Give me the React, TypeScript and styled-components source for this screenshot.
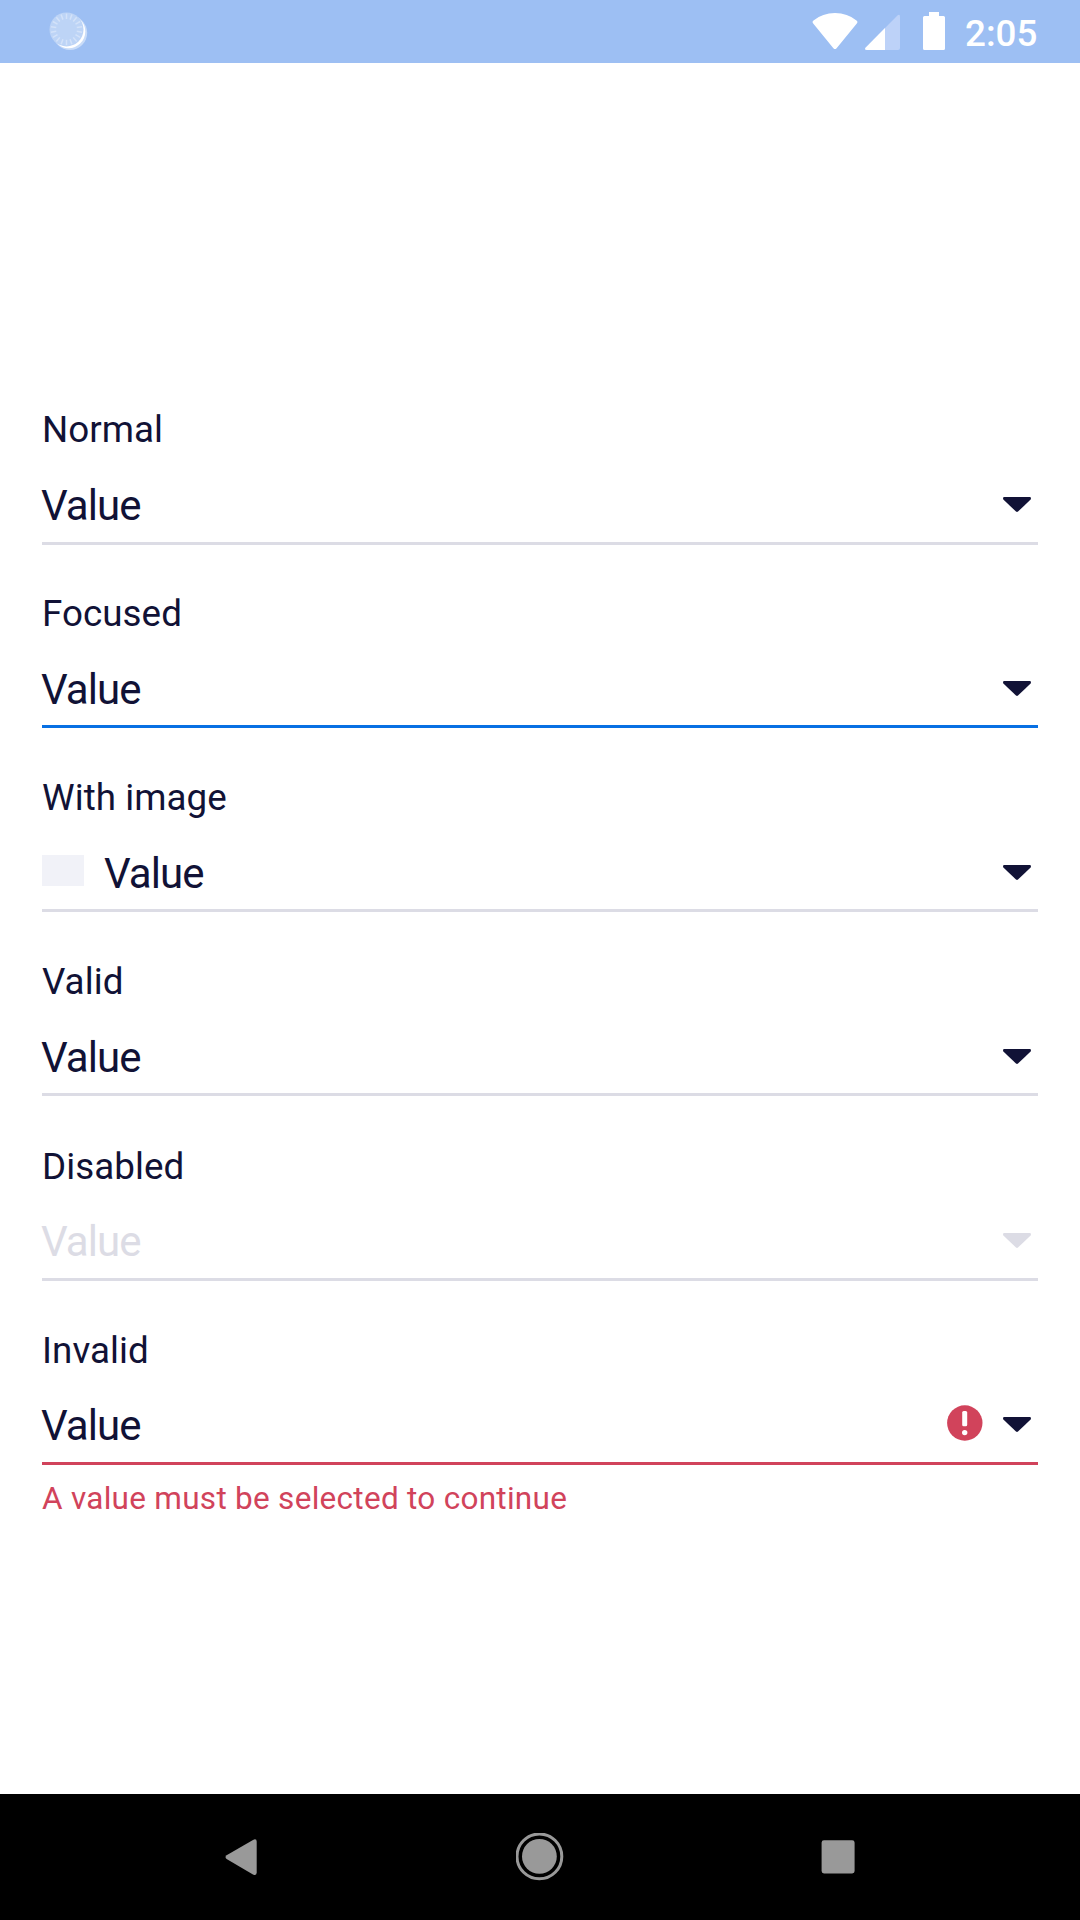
import React from 'react';
import styled, { createGlobalStyle } from 'styled-components';

const color = {
  ink: '#111236',
  line: '#dcdce5',
  focus: '#0770e3',
  error: '#d1435b',
  image: '#f1f2f8',
  status: '#9dbff3',
  nav: '#999999',
};

const GlobalStyle = createGlobalStyle`
  body {
    margin: 0;
    background: #ffffff;
    font-family: Roboto, 'Noto Sans', sans-serif;
  }
`;

const Screen = styled.div`
  display: flex;
  flex-direction: column;
  width: 1080px;
  height: 1920px;
  overflow: hidden;
  background: #ffffff;
`;

const StatusBar = styled.header`
  display: flex;
  align-items: flex-start;
  box-sizing: border-box;
  height: 63px;
  padding: 10px 41px 0 48px;
  background: ${color.status};
`;

const StatusIcons = styled.div`
  display: flex;
  margin-left: auto;
`;

const Clock = styled.time`
  width: 74px;
  margin: 2px 0 0 17px;
  color: #ffffff;
  font-size: 36.75px;
  font-weight: 500;
  line-height: 44px;
  white-space: nowrap;
`;

const Form = styled.main`
  display: flex;
  flex: 1;
  flex-direction: column;
  padding: 345px 42px 0;
`;

const FieldBox = styled.section<{ $gap: number }>`
  display: flex;
  flex-direction: column;
  margin-bottom: ${(p) => p.$gap}px;
`;

const Label = styled.label<{ $height: number }>`
  height: ${(p) => p.$height}px;
  color: ${color.ink};
  font-size: 36.75px;
  line-height: 44px;
  letter-spacing: 0.05px;
  white-space: nowrap;
`;

const Control = styled.div<{ $height: number; $line: string }>`
  display: flex;
  align-items: flex-start;
  height: ${(p) => p.$height}px;
  border-bottom: 3px solid ${(p) => p.$line};
`;

const Picture = styled.span`
  width: 42px;
  height: 31px;
  margin: 8px 21px 0 0;
  background: ${color.image};
`;

const Value = styled.span<{ $color: string }>`
  flex: 1;
  margin: 2px 0 0 -1px;
  color: ${(p) => p.$color};
  font-size: 42px;
  line-height: 50px;
  letter-spacing: -0.95px;
`;

const Caret = styled.svg`
  margin: 17px 7px 0 0;
`;

const ErrorBadge = styled.svg`
  margin: 4px 20px 0 0;
`;

const Message = styled.p`
  margin: 14px 0 0;
  color: ${color.error};
  font-size: 31.5px;
  line-height: 40px;
  letter-spacing: 0.28px;
  white-space: nowrap;
`;

const NavBar = styled.nav`
  display: flex;
  align-items: center;
  justify-content: center;
  gap: 250px;
  height: 126px;
  background: #000000;
`;

const NavIcon = styled.svg`
  display: block;
`;

interface FieldProps {
  label: string;
  labelHeight?: number;
  controlHeight?: number;
  gap?: number;
  line?: string;
  image?: boolean;
  disabled?: boolean;
  error?: string;
}

function Field({
  label,
  labelHeight = 71,
  controlHeight = 63,
  gap = 47,
  line = color.line,
  image,
  disabled,
  error,
}: FieldProps) {
  const tint = disabled ? color.line : color.ink;
  return (
    <FieldBox $gap={gap}>
      <Label $height={labelHeight}>{label}</Label>
      <Control $height={controlHeight} $line={line}>
        {image && <Picture />}
        <Value $color={tint}>Value</Value>
        {error && (
          <ErrorBadge width="36" height="40" viewBox="0 0 36 40">
            <circle cx="17.8" cy="20" r="17.7" fill={color.error} />
            <rect x="15.2" y="7.9" width="5" height="15.4" rx="1.5" fill="#fff" />
            <circle cx="17.7" cy="29.6" r="2.7" fill="#fff" />
          </ErrorBadge>
        )}
        <Caret width="28" height="18" viewBox="0 0 28 18">
          <path
            d="M1.2 1H26.8C28 1 28.4 2.8 27.4 3.8L15 15.6Q14 16.5 13 15.6L.6 3.8C-.4 2.8 0 1 1.2 1Z"
            fill={tint}
          />
        </Caret>
      </Control>
      {error && <Message>{error}</Message>}
    </FieldBox>
  );
}

function Spinner() {
  const ticks = Array.from({ length: 18 }, (_, i) => i * 20);
  return (
    <svg width="42" height="42" viewBox="0 0 42 42">
      <circle cx="22" cy="22.8" r="17.2" fill="#fff" fillOpacity=".45" />
      <circle cx="20.6" cy="21.5" r="16.7" fill="#fff" />
      <circle cx="18.5" cy="19.4" r="17" fill="#bdd4f6" />
      {ticks.map((angle) => (
        <path
          key={angle}
          d="M18.5 3.6V9"
          stroke="#d3e2f9"
          strokeWidth="1.5"
          transform={`rotate(${angle} 18.5 19.4)`}
        />
      ))}
    </svg>
  );
}

export default function App() {
  return (
    <>
      <GlobalStyle />
      <Screen>
        <StatusBar>
          <Spinner />
          <StatusIcons>
            <svg width="136" height="42" viewBox="812 10 136 42">
              <path
                d="M813 23.2Q811.9 21.6 813.5 20.5Q822.5 13 835 13T856.5 20.5Q858.1 21.6 857 23.2L836.6 48.2Q835 50 833.4 48.2Z"
                fill="#fff"
              />
              <path
                d="M866 47.2 897.2 15.7Q900 13.6 900 16.5V48Q900 50 898 50H867Q863.7 49.7 866 47.2Z"
                fill="#bdd2f8"
              />
              <path d="M885 27.9V50H867Q863.7 49.7 866 47.2Z" fill="#fff" />
              <path
                d="M929 12H939V16H943.5Q945 16 945 17.5V48.5Q945 50 943.5 50H924.5Q923 50 923 48.5V17.5Q923 16 924.5 16H929Z"
                fill="#fff"
              />
            </svg>
            <Clock>2:05</Clock>
          </StatusIcons>
        </StatusBar>

        <Form>
          <Field label="Normal" labelHeight={71} controlHeight={63} gap={47} />
          <Field label="Focused" labelHeight={71} controlHeight={62} gap={48} line={color.focus} />
          <Field label="With image" labelHeight={71} controlHeight={62} gap={48} image />
          <Field label="Valid" labelHeight={71} controlHeight={62} gap={49} />
          <Field label="Disabled" labelHeight={70} controlHeight={63} gap={48} disabled />
          <Field
            label="Invalid"
            labelHeight={70}
            controlHeight={63}
            line={color.error}
            error="A value must be selected to continue"
          />
        </Form>

        <NavBar>
          <NavIcon width="48" height="48" viewBox="218 1833 48 48">
            <path
              d="M226.6 1855.2 253 1839.9Q256.7 1838.2 256.7 1841.8V1872.6Q256.7 1876.2 253 1874.5L226.6 1859Q224.4 1857.1 226.6 1855.2Z"
              fill={color.nav}
            />
          </NavIcon>
          <NavIcon width="48" height="48" viewBox="516 1833 48 48">
            <circle cx="539.4" cy="1856.4" r="22.4" fill="none" stroke={color.nav} strokeWidth="3" />
            <circle cx="539.4" cy="1856.4" r="17.4" fill={color.nav} />
          </NavIcon>
          <NavIcon width="48" height="48" viewBox="814 1833 48 48">
            <rect x="821.6" y="1840.3" width="33" height="33.2" rx="2.4" fill={color.nav} />
          </NavIcon>
        </NavBar>
      </Screen>
    </>
  );
}
